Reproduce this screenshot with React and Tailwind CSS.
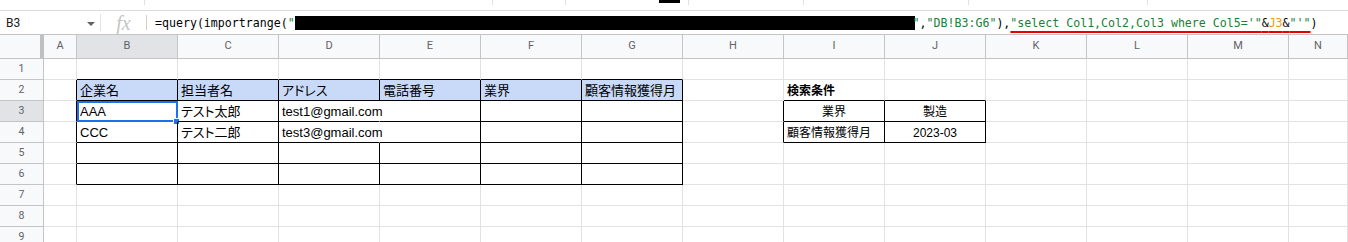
import React from "react";

const COLS = ["A", "B", "C", "D", "E", "F", "G", "H", "I", "J", "K", "L", "M", "N"];
const ROWS = [1, 2, 3, 4, 5, 6, 7, 8, 9];

// cell contents: text, align, size, bold
const DATA = {
  B2: { t: "企業名" },
  C2: { t: "担当者名" },
  D2: { t: "アドレス" },
  E2: { t: "電話番号" },
  F2: { t: "業界" },
  G2: { t: "顧客情報獲得月" },
  I2: { t: "検索条件", bold: true, small: true },
  B3: { t: "AAA" },
  C3: { t: "テスト太郎" },
  D3: { t: "test1@gmail.com" },
  I3: { t: "業界", center: true, small: true },
  J3: { t: "製造", center: true, small: true },
  B4: { t: "CCC" },
  C4: { t: "テスト二郎" },
  D4: { t: "test3@gmail.com" },
  I4: { t: "顧客情報獲得月", small: true },
  J4: { t: "2023-03", center: true, small: true },
};

function rightBorder(r, ci) {
  // D3/D4 text runs over into E, no line there
  if ((r === 3 || r === 4) && ci === 3) return "border-r-transparent";
  if (r >= 2 && r <= 6 && ci <= 6) return "border-r-black";
  if (r >= 3 && r <= 4 && ci >= 7 && ci <= 9) return "border-r-black";
  return "border-r-[#e2e2e3]";
}

function bottomBorder(r, ci) {
  if (r >= 1 && r <= 6 && ci >= 1 && ci <= 6) return "border-b-black";
  if (r >= 2 && r <= 4 && ci >= 8 && ci <= 9) return "border-b-black";
  return "border-b-[#e2e2e3]";
}

function Cell({ r, ci }) {
  const key = COLS[ci] + r;
  const d = DATA[key];
  const header = r === 2 && ci >= 1 && ci <= 6;
  return (
    <div
      className={`relative flex items-end whitespace-nowrap border-r border-b px-[3px] pb-[1px] text-black ${rightBorder(r, ci)} ${bottomBorder(r, ci)} ${
        header ? "bg-[#c9daf8]" : ""
      } ${d && d.center ? "justify-center" : ""}`}
    >
      {d ? (
        <span
          className={`leading-[16px] [font-feature-settings:'palt'] ${d.small ? "text-[12px]" : "text-[13px]"} ${d.bold ? "font-bold" : ""}`}
        >
          {d.t}
        </span>
      ) : null}
      {key === "B3" && (
        <>
          <div className="pointer-events-none absolute left-0 top-0 -right-px -bottom-px border-2 border-[#1a73e8]" />
          <div className="absolute -right-[3px] -bottom-[4px] h-[7px] w-[7px] border border-white bg-[#1a73e8]" />
        </>
      )}
    </div>
  );
}

function TopStrip() {
  return (
    <div className="flex h-[11px] items-start border-b border-[#dadce0]">
      <div className="ml-[144px] h-[5px] w-px bg-[#e0e0e0]" />
      <div className="ml-[347px] h-[5px] w-px bg-[#e0e0e0]" />
      <div className="ml-[72px] h-[5px] w-px bg-[#e0e0e0]" />
      <div className="ml-[93px] h-[3px] w-[21px] bg-black" />
      <div className="ml-[8px] h-[5px] w-px bg-[#e0e0e0]" />
      <div className="ml-[114px] h-[5px] w-px bg-[#e0e0e0]" />
      <div className="ml-[164px] h-[5px] w-px bg-[#e0e0e0]" />
      <div className="ml-[178px] h-[5px] w-px bg-[#e0e0e0]" />
    </div>
  );
}

function FormulaBar() {
  const g = "text-[#188038]";
  return (
    <div className="flex h-[23px] items-center">
      <div className="flex w-[100px] items-center pl-[6px] pr-[5px] font-['Roboto'] text-[12px] text-[#202124]">
        <span className="flex-1">B3</span>
        <svg width="8" height="4" viewBox="0 0 8 4" className="mt-[2px]">
          <path d="M0 0 L8 0 L4 4 Z" fill="#5f6368" />
        </svg>
      </div>
      <div className="h-[17px] w-px bg-[#e3e3e3]" />
      <div className="flex w-[45px] items-center justify-center font-['Liberation_Serif'] text-[20px] italic leading-none text-[#c4c4c4]">
        fx
      </div>
      <div className="h-[15px] w-px bg-[#d0d0d0]" />
      <div className="ml-[8px] flex items-center whitespace-nowrap font-['DejaVu_Sans_Mono'] text-[11.6px] leading-[16px] text-black">
        <span>=query(importrange(</span>
        <span className={g}>"</span>
        <span className="inline-block h-[14px] w-[620px] bg-black" />
        <span className={`${g} -ml-[2px]`}>"</span>
        <span>,</span>
        <span className={g}>"DB!B3:G6"</span>
        <span>),</span>
        <span className="underline decoration-[#e60000] decoration-2 underline-offset-[4px]">
          <span className={g}>"select Col1,Col2,Col3 where Col5='"</span>
          <span>&amp;</span>
          <span className="text-[#f29a12]">J3</span>
          <span>&amp;</span>
          <span className={g}>"'"</span>
        </span>
        <span>)</span>
      </div>
    </div>
  );
}

export default function App() {
  return (
    <div className="h-[242px] w-[1348px] overflow-hidden bg-white font-['Liberation_Sans','Noto_Sans_CJK_JP',sans-serif]">
      <TopStrip />
      <FormulaBar />
      <div className="grid grid-cols-[44px_33px_repeat(12,101px)_1fr] grid-rows-[24px_repeat(9,21px)] border-t border-[#c4c4c4]">
        {/* corner */}
        <div className="border-r-4 border-b border-r-[#c0c0c0] border-b-[#c4c4c4] bg-[#f8f9fa]" />
        {COLS.map((c) => (
          <div
            key={c}
            className={`flex items-center justify-center border-r border-b border-[#c4c4c4] font-['Roboto'] text-[11px] text-[#5f6368] ${
              c === "B" ? "bg-[#e1e3e6]" : "bg-[#f8f9fa]"
            }`}
          >
            {c}
          </div>
        ))}
        {ROWS.map((r) => (
          <React.Fragment key={r}>
            <div
              className={`flex items-center justify-center border-r border-b border-r-[#c4c4c4] border-b-[#c4c4c4] font-['Roboto'] text-[10.5px] text-[#5f6368] ${
                r === 3 ? "bg-[#e1e3e6]" : "bg-[#f8f9fa]"
              }`}
            >
              {r}
            </div>
            {COLS.map((c, ci) => (
              <Cell key={c} r={r} ci={ci} />
            ))}
          </React.Fragment>
        ))}
      </div>
    </div>
  );
}
